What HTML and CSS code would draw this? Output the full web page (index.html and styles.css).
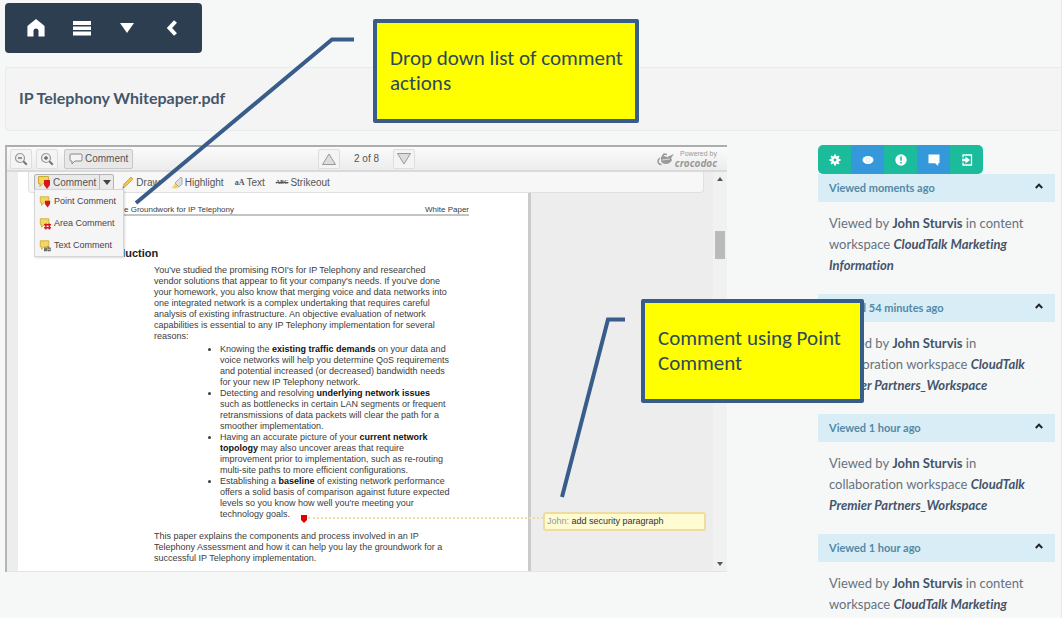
FILE: index.html
```html
<!DOCTYPE html>
<html lang="en">
<head>
<meta charset="utf-8">
<title>IP Telephony Whitepaper.pdf</title>
<link rel="stylesheet" href="styles.css">
</head>
<body>
<div class="app">
  <nav class="navbar" aria-label="Main">
    <button aria-label="Home"><svg width="20" height="20" viewBox="0 0 20 20"><path fill="#fff" d="M10 1 18 7.500a1.500 1.500 0 0 1 .6 1.200V18.500H12.500V13a2.500 2.500 0 0 0-5 0v5.500H1.400V8.700A1.500 1.500 0 0 1 2 7.500Z"/></svg></button>
    <button aria-label="Menu"><svg width="18" height="16" viewBox="0 0 18 16"><path fill="#fff" d="M0 1h18v4H0zM0 6.500h18v3.500H0zM0 11.500h18v4H0z"/></svg></button>
    <button aria-label="More"><svg width="14" height="10" viewBox="0 0 14 10"><path fill="#fff" d="M0 0h14L7 10z"/></svg></button>
    <button aria-label="Back"><svg width="12" height="16" viewBox="0 0 12 16"><path fill="none" stroke="#fff" stroke-width="4" d="M9.500 1.500 3.500 8l6 6.500"/></svg></button>
  </nav>

  <header class="title-panel"><h1>IP Telephony Whitepaper.pdf</h1></header>

  <main class="columns">
    <section class="viewer" aria-label="Document viewer">
      <div class="toolbar">
        <div class="tools">
          <button class="tool" aria-label="Zoom out"><svg width="14" height="14" viewBox="0 0 14 14"><circle cx="6" cy="6" r="4.500" fill="#eee" stroke="#999" stroke-width="1.200"/><path stroke="#666" stroke-width="1.300" d="M4 6h4"/><path stroke="#777" stroke-width="2" d="m9.300 9.300 3.500 3.500"/></svg></button>
          <button class="tool" aria-label="Zoom in"><svg width="14" height="14" viewBox="0 0 14 14"><circle cx="6" cy="6" r="4.500" fill="#eee" stroke="#999" stroke-width="1.200"/><path stroke="#666" stroke-width="1.300" d="M4 6h4M6 4v4"/><path stroke="#777" stroke-width="2" d="m9.300 9.300 3.500 3.500"/></svg></button>
          <button class="tool tool-on"><svg width="14" height="12" viewBox="0 0 14 12"><path fill="#f4f4f4" stroke="#888" d="M2 1h10q1 0 1 1v5q0 1-1 1H6L3 11V8H2Q1 8 1 7V2q0-1 1-1Z"/></svg>Comment</button>
        </div>
        <div class="pager">
          <button class="tool" aria-label="Previous page"><svg width="16" height="14" viewBox="0 0 16 14"><path fill="#ddd" stroke="#999" d="M8 2l6.500 10.500h-13z"/></svg></button>
          <span>2 of 8</span>
          <button class="tool" aria-label="Next page"><svg width="16" height="14" viewBox="0 0 16 14"><path fill="#ddd" stroke="#999" d="M8 12 1.500 1.500h13z"/></svg></button>
        </div>
        <a class="brand" href="#"><svg width="18" height="14" viewBox="0 0 18 14"><path fill="none" stroke="#999" stroke-width="1.500" d="M3 6Q0 8 1.500 11q1 1.500 3 1.500M5 5l2-3 3 .5"/><path fill="#999" d="M4 5q4-2 6 0l7-3-3 4 1 2q-2 4-6 4T4 9Z"/><path stroke="#e8e8e8" stroke-width=".8" d="m5 8 8-1M8 4l3 1"/></svg><span class="brand-text"><small>Powered by</small><b>crocodoc</b></span></a>
      </div>

      <div class="stage">
        <article class="page">
          <div class="running-head"><span>e Groundwork for IP Telephony</span><span>White Paper</span></div>
          <h2>Introduction</h2>
          <div class="copy">
            <p>You've studied the promising ROI's for IP Telephony and researched<br>vendor solutions that appear to fit your company's needs. If you've done<br>your homework, you also know that merging voice and data networks into<br>one integrated network is a complex undertaking that requires careful<br>analysis of existing infrastructure. An objective evaluation of network<br>capabilities is essential to any IP Telephony implementation for several<br>reasons:</p>
            <ul>
              <li>Knowing the <b>existing traffic demands</b> on your data and<br>voice networks will help you determine QoS requirements<br>and potential increased (or decreased) bandwidth needs<br>for your new IP Telephony network.</li>
              <li>Detecting and resolving <b>underlying network issues</b><br>such as bottlenecks in certain LAN segments or frequent<br>retransmissions of data packets will clear the path for a<br>smoother implementation.</li>
              <li>Having an accurate picture of your <b>current network<br>topology</b> may also uncover areas that require<br>improvement prior to implementation, such as re-routing<br>multi-site paths to more efficient configurations.</li>
              <li>Establishing a <b>baseline</b> of existing network performance<br>offers a solid basis of comparison against future expected<br>levels so you know how well you're meeting your<br>technology goals.</li>
            </ul>
            <p>This paper explains the components and process involved in an IP<br>Telephony Assessment and how it can help you lay the groundwork for a<br>successful IP Telephony implementation.</p>
          </div>
        </article>
        <div class="scrollbar" aria-hidden="true"><i class="up"></i><i class="thumb"></i><i class="down"></i></div>

        <div class="annotate">
          <div class="split">
            <button class="split-main"><svg width="14" height="14" viewBox="0 0 14 14"><path fill="#f3d95b" stroke="#cfa93a" d="M1.500 1.500h10v7H6l-3 3v-3H1.500Z"/><path fill="#d8151a" d="M7 5h6v5l-3 4-3-4Z"/></svg>Comment</button>
            <button class="split-arrow" aria-label="Comment types"><svg width="8" height="5" viewBox="0 0 8 5"><path fill="#444" d="M0 0h8L4 5z"/></svg></button>
          </div>
          <button class="draw"><svg width="12" height="13" viewBox="0 0 12 13"><path fill="#efc94e" stroke="#c89a35" stroke-width=".8" d="m1 12 1-4 7-7 2 2-7 7Z"/><path fill="#777" d="m.5 12.500.6-2 1.400 1.400z"/></svg>Draw</button>
          <button class="highlight"><svg width="12" height="13" viewBox="0 0 12 13"><path fill="#f5d445" d="M0 12q3-1 4-5l4 4-3 1.500Z"/><path fill="#ddd" stroke="#999" stroke-width=".8" d="m4 7 6-6 1 1v6l-3 3Z"/></svg>Highlight</button>
          <button class="text-tool"><span class="glyph">aA</span>Text</button>
          <button class="strike"><s class="glyph">ABC</s>Strikeout</button>
        </div>

        <div class="menu">
          <button><svg width="12" height="13" viewBox="0 0 14 14"><path fill="#f3d95b" stroke="#cfa93a" d="M1.500 1.500h10v7H6l-3 3v-3H1.500Z"/><path fill="#d8151a" d="M7 6h6v4l-3 4-3-4Z"/></svg>Point Comment</button>
          <button><svg width="12" height="13" viewBox="0 0 14 14"><path fill="#f3d95b" stroke="#cfa93a" d="M1.500 1.500h10v7H6l-3 3v-3H1.500Z"/><path fill="none" stroke="#d8151a" stroke-width="1.600" d="M6 8.500h8M6 12h8M8 7v7M12 7v7"/></svg>Area Comment</button>
          <button><svg width="12" height="13" viewBox="0 0 14 14"><path fill="#f3d95b" stroke="#cfa93a" d="M1.500 1.500h10v7H6l-3 3v-3H1.500Z"/><path fill="none" stroke="#555" stroke-width="1.200" d="M6 10h2.500v3H6.500v-1.500h2M10.500 8v5H13v-3h-2.500"/></svg>Text Comment</button>
        </div>

        <svg class="pin" width="6" height="8" viewBox="0 0 6 8"><path fill="#e00000" d="M0 0h6v5L3 8 0 5Z"/></svg>
        <div class="pin-line"></div>
        <div class="note"><span>John:</span> add security paragraph</div>
      </div>
    </section>

    <aside class="activity">
      <div class="actions">
        <button aria-label="Settings"><svg width="12" height="12" viewBox="0 0 12 12"><circle cx="6" cy="6" r="2.700" fill="none" stroke="#fff" stroke-width="2.500"/><path stroke="#fff" stroke-width="2" d="M6 .5V3M6 9v2.500M.5 6H3M9 6h2.500M2.100 2.100l1.700 1.700M8.200 8.200l1.700 1.700M2.100 9.900l1.700-1.700M8.200 3.800l1.700-1.700"/></svg></button>
        <button aria-label="Views"><svg width="12" height="10" viewBox="0 0 12 10"><ellipse cx="6" cy="5" rx="5.500" ry="4" fill="#fff"/><circle cx="6" cy="5" r="2" fill="none" stroke="#cfe6f7" stroke-width="1"/></svg></button>
        <button aria-label="Alerts"><svg width="12" height="12" viewBox="0 0 12 12"><circle cx="6" cy="6" r="5.700" fill="#fff"/><path stroke="#1abc9c" stroke-width="1.600" d="M6 2.500v4.300M6 8v1.600"/></svg></button>
        <button aria-label="Comments"><svg width="12" height="12" viewBox="0 0 12 12"><path fill="#fff" d="M.5.5h11v8.700h-1.300V12L7 9.200H.5z"/></svg></button>
        <button aria-label="Check out"><svg width="12" height="12" viewBox="0 0 12 12"><path fill="none" stroke="#fff" stroke-width="1.300" d="M2 3.500V1h8.500v10H2V8.500"/><path fill="#fff" d="M1 4.800h3.500V2.500L9 6 4.500 9.500V7.200H1z"/></svg></button>
      </div>
      <section class="event">
        <h3>Viewed moments ago<button aria-label="Collapse"><svg width="8" height="6" viewBox="0 0 8 6"><path fill="none" stroke="#222" stroke-width="2" d="M.8 5 4 1.600 7.200 5"/></svg></button></h3>
        <p>Viewed by <b>John Sturvis</b> in content<br>workspace <b><i>CloudTalk Marketing<br>Information</i></b></p>
      </section>
      <section class="event">
        <h3>Viewed 54 minutes ago<button aria-label="Collapse"><svg width="8" height="6" viewBox="0 0 8 6"><path fill="none" stroke="#222" stroke-width="2" d="M.8 5 4 1.600 7.200 5"/></svg></button></h3>
        <p>Viewed by <b>John Sturvis</b> in<br>collaboration workspace <b><i>CloudTalk<br>Premier Partners_Workspace</i></b></p>
      </section>
      <section class="event">
        <h3>Viewed 1 hour ago<button aria-label="Collapse"><svg width="8" height="6" viewBox="0 0 8 6"><path fill="none" stroke="#222" stroke-width="2" d="M.8 5 4 1.600 7.200 5"/></svg></button></h3>
        <p>Viewed by <b>John Sturvis</b> in<br>collaboration workspace <b><i>CloudTalk<br>Premier Partners_Workspace</i></b></p>
      </section>
      <section class="event">
        <h3>Viewed 1 hour ago<button aria-label="Collapse"><svg width="8" height="6" viewBox="0 0 8 6"><path fill="none" stroke="#222" stroke-width="2" d="M.8 5 4 1.600 7.200 5"/></svg></button></h3>
        <p>Viewed by <b>John Sturvis</b> in content<br>workspace <b><i>CloudTalk Marketing</i></b></p>
      </section>
    </aside>
  </main>

  <svg class="leaders" width="640" height="510" viewBox="0 0 640 510" aria-hidden="true"><path d="M354 39.500H332L136 203M625 319.500H608L562 497"/></svg>
  <div class="callout callout-actions">Drop down list of comment<br>actions</div>
  <div class="callout callout-point">Comment using Point<br>Comment</div>
</div>
</body>
</html>
```
FILE: styles.css
```css
* { box-sizing: border-box; }

body {
  margin: 0;
  background: #f6f8f8;
  font-family: Lato, sans-serif;
  font-variant-ligatures: none;
  color: #34495e;
}

button {
  display: flex;
  align-items: center;
  justify-content: center;
  margin: 0;
  padding: 0;
  border: 0;
  background: none;
  font: inherit;
  color: inherit;
}

svg { display: block; flex: none; }

h1, h2, h3, p, ul { margin: 0; padding: 0; }

.app {
  position: relative;
  min-height: 100vh;
  padding: 3px 0 0 5px;
  border-right: 1px solid #e6e9ea;
  overflow: hidden;
}

.navbar {
  display: flex;
  width: max-content;
  padding: 0 8px;
  border-radius: 4px;
  background: #2c3e50;
}
.navbar button { width: 45px; height: 50px; }
.navbar button:first-child { margin-right: 1px; }

.title-panel {
  margin-top: 14px;
  padding: 18px 13px 20px;
  border: 1px solid #e9eced;
  border-right: 0;
  border-radius: 3px 0 0 3px;
  background: #f4f4f4;
}
.title-panel h1 { font-size: 16px; line-height: 24px; font-weight: 700; color: #44566a; }

.columns {
  display: grid;
  grid-template-columns: minmax(0, 722fr) minmax(0, 237fr);
  column-gap: 91px;
  align-items: start;
  padding: 14px 6px 0 0;
}

.viewer {
  border-top: 2px solid #adadad;
  border-left: 2px solid #b5b5b5;
  font-family: "Liberation Sans", Arial, sans-serif;
  color: #555;
}

.toolbar {
  display: grid;
  grid-template-columns: 1fr auto 1fr;
  align-items: center;
  height: 25px;
  padding: 0 10px 0 3px;
  border-bottom: 2px solid #dadada;
  background: linear-gradient(#fbfbfb, #ececec);
  font-size: 10px;
}
.tools, .pager { display: flex; align-items: center; gap: 4px; }
.tools .tool-on { margin-left: 2px; }
.tool {
  min-width: 22px;
  height: 20px;
  border: 1px solid #dedede;
  border-radius: 2px;
  background: #f4f4f4;
}
.tool-on { gap: 2px; padding: 0 4px; border-color: #c8c8c8; background: #e8e8e8; }
.pager { gap: 14px; margin-left: 6px; }

.brand {
  display: flex;
  justify-self: end;
  align-items: center;
  color: #999;
  text-decoration: none;
}
.brand-text { display: flex; flex-direction: column; align-items: flex-end; }
.brand small { font-size: 7px; line-height: 8px; }
.brand b { font: italic 700 10px/10px "Open Sans", sans-serif; }

.stage {
  position: relative;
  display: flex;
  justify-content: space-between;
  height: 400px;
  padding-left: 11px;
  border-bottom: 1px solid #e4e4e4;
  background: #ededed;
}

.page {
  width: 513px;
  padding: 33px 59px 0 76px;
  border-right: 3px solid #cbcbcb;
  background: #fff;
  color: #3c3c3c;
  white-space: nowrap;
}
.running-head {
  display: flex;
  justify-content: space-between;
  padding-left: 30px;
  border-bottom: 2px solid #c4c4c4;
  font-size: 8px;
  line-height: 9px;
}
.page h2 { margin-top: 30px; font-size: 11px; line-height: 14px; color: #222; }
.copy { padding: 5px 0 0 60px; font-size: 9px; line-height: 11px; }
.copy b { color: #111; }
.copy ul { padding: 2px 0 11px 66px; }

.scrollbar {
  display: flex;
  flex-direction: column;
  align-items: center;
  width: 14px;
  padding: 5px 0;
  background: #f1f1f1;
}
.up, .down { border: 3px solid transparent; }
.up { border-top: 0; border-bottom: 4px solid #555; }
.down { margin-top: auto; border-bottom: 0; border-top: 4px solid #555; }
.thumb { width: 10px; height: 28px; margin-top: 50px; background: #bababa; }

.annotate {
  position: absolute;
  top: 0;
  left: 21px;
  right: 23px;
  display: flex;
  align-items: center;
  height: 21px;
  padding-left: 5px;
  border: 1px solid #e0e0e0;
  border-top: 0;
  border-radius: 0 0 4px 4px;
  background: #f7f7f7;
  font-size: 10px;
}
.annotate button { gap: 2px; }
.split {
  display: flex;
  height: 16px;
  margin-right: 8px;
  border: 1px solid #b5b5b5;
  border-radius: 2px;
  background: #eaeaea;
}
.split-main { padding: 0 3px 0 2px; }
.split-arrow { width: 14px; border-left: 1px solid #b5b5b5; }
.highlight, .text-tool, .strike { margin-left: 11px; }
.glyph { font: 700 8px "Liberation Serif", serif; }
.strike .glyph { font-size: 6px; }

.menu {
  position: absolute;
  top: 17px;
  left: 27px;
  width: 90px;
  border: 1px solid #d5d5d5;
  background: #f5f5f5;
  box-shadow: 1px 1px 2px rgba(0, 0, 0, .15);
  font-size: 9px;
  color: #4a404c;
}
.menu button { justify-content: flex-start; gap: 3px; width: 100%; height: 22px; padding-left: 4px; white-space: nowrap; }

.pin { position: absolute; top: 343px; left: 294px; }
.pin-line { position: absolute; top: 345px; left: 301px; width: 235px; border-top: 2px dotted #f3dc9c; }
.note {
  position: absolute;
  top: 340px;
  left: 536px;
  width: 163px;
  padding: 3px 2px;
  border: 2px solid #f0dc9e;
  border-radius: 3px;
  background: #fffbd2;
  font-size: 9px;
  line-height: 9px;
  color: #333;
}
.note span { color: #999; }

.actions { display: flex; width: max-content; border-radius: 5px; overflow: hidden; }
.actions button { width: 33px; height: 29px; background: #1abc9c; }
.actions button:nth-child(even) { background: #3498db; }
.event { margin-bottom: 18px; }
.event h3 {
  display: flex;
  justify-content: space-between;
  padding: 0 12px 0 11px;
  background: #d9edf7;
  font-size: 11px;
  line-height: 28px;
  font-weight: 700;
  color: #5389a5;
}
.event button { height: 24px; }
.event p { padding: 11px 0 0 11px; font-size: 13px; line-height: 21px; color: #66717e; white-space: nowrap; }
.event b { color: #44546a; }

.leaders { position: absolute; top: 0; left: 0; pointer-events: none; }
.leaders path { fill: none; stroke: #385d8a; stroke-width: 4; }

.callout {
  position: absolute;
  display: flex;
  align-items: center;
  height: 104px;
  padding-left: 13px;
  border: 4px solid #385d8a;
  border-radius: 2px;
  background: #ff0;
  font-family: Carlito, Calibri, Lato, sans-serif;
  font-size: 21px;
  line-height: 25px;
  color: #2c4a5a;
  white-space: nowrap;
}
.callout-actions { top: 19px; left: 373px; width: 266px; }
.callout-point { top: 299px; left: 641px; width: 223px; }
```
